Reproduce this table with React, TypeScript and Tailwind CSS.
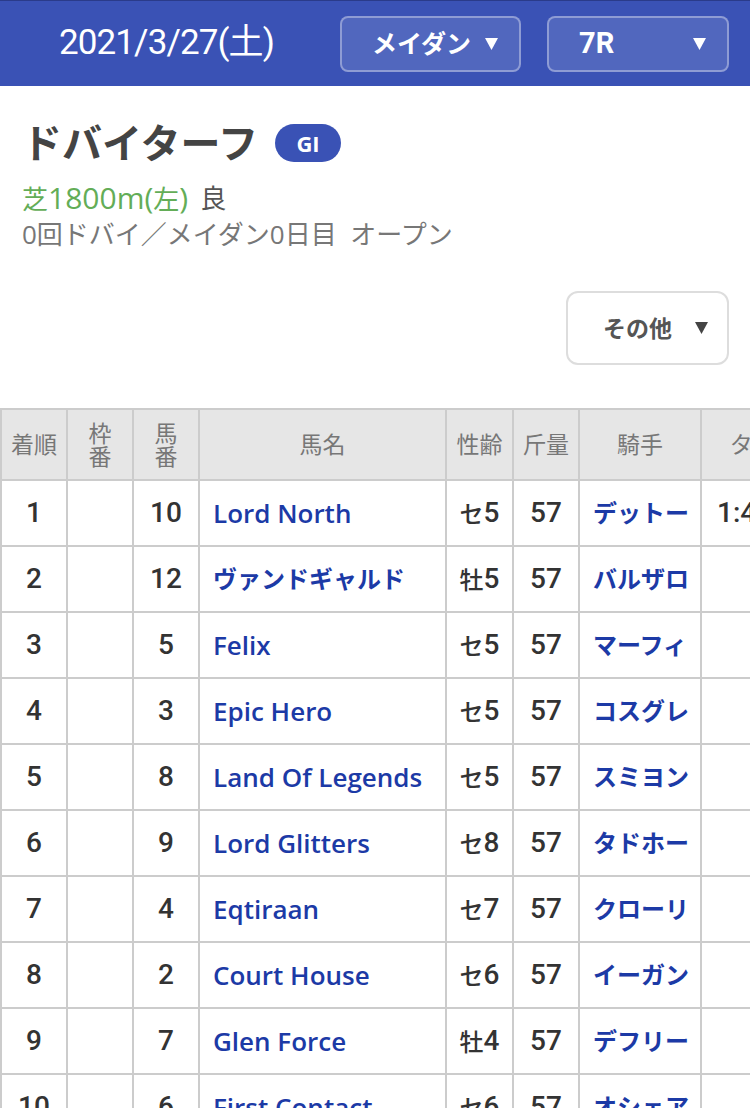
import React from "react";

type Row = {
  rank: number;
  waku: string;
  umaban: number;
  name: string;
  sex: string;
  age: number;
  weight: number;
  jockey: string;
  time: string;
};

const rows: Row[] = [
  { rank: 1, waku: "", umaban: 10, name: "Lord North", sex: "セ", age: 5, weight: 57, jockey: "デットー", time: "1:46.9" },
  { rank: 2, waku: "", umaban: 12, name: "ヴァンドギャルド", sex: "牡", age: 5, weight: 57, jockey: "バルザロ", time: "" },
  { rank: 3, waku: "", umaban: 5, name: "Felix", sex: "セ", age: 5, weight: 57, jockey: "マーフィ", time: "" },
  { rank: 4, waku: "", umaban: 3, name: "Epic Hero", sex: "セ", age: 5, weight: 57, jockey: "コスグレ", time: "" },
  { rank: 5, waku: "", umaban: 8, name: "Land Of Legends", sex: "セ", age: 5, weight: 57, jockey: "スミヨン", time: "" },
  { rank: 6, waku: "", umaban: 9, name: "Lord Glitters", sex: "セ", age: 8, weight: 57, jockey: "タドホー", time: "" },
  { rank: 7, waku: "", umaban: 4, name: "Eqtiraan", sex: "セ", age: 7, weight: 57, jockey: "クローリ", time: "" },
  { rank: 8, waku: "", umaban: 2, name: "Court House", sex: "セ", age: 6, weight: 57, jockey: "イーガン", time: "" },
  { rank: 9, waku: "", umaban: 7, name: "Glen Force", sex: "牡", age: 4, weight: 57, jockey: "デフリー", time: "" },
  { rank: 10, waku: "", umaban: 6, name: "First Contact", sex: "セ", age: 6, weight: 57, jockey: "オシェア", time: "" },
];

function Caret({ className }: { className?: string }) {
  return (
    <svg width="13" height="12" viewBox="0 0 13 12" className={className}>
      <polygon points="0,0 13,0 6.5,12" fill="currentColor" />
    </svg>
  );
}

function Select({ label, width, size }: { label: string; width: string; size: string }) {
  return (
    <div
      className={`${width} h-[56px] flex items-center justify-between pl-[30px] pr-[21px] rounded-[8px] border-2 border-white/35 bg-white/12 text-white`}
    >
      <span className={`${size} font-bold leading-none`}>{label}</span>
      <Caret />
    </div>
  );
}

const cell = "border-r-2 border-b-2 border-[#cccccc] flex items-center";
const num = "font-['Roboto','Noto_Sans_CJK_JP',sans-serif] text-[28px] font-medium text-[#333]";
const isLatin = (s: string) => /^[\x00-\x7F]+$/.test(s);

export default function App() {
  return (
    <div className="w-[750px] min-h-[1108px] bg-white overflow-hidden font-['Open_Sans','Noto_Sans_CJK_JP',sans-serif] text-[#333]">
      <header className="h-[86px] bg-[#3a52b5] border-t border-[#2a3b8a] flex items-center">
        <div className="w-[333px] text-center text-white text-[35px] font-['Roboto','Noto_Sans_CJK_JP',sans-serif] tracking-[-0.9px]">
          2021/3/27(土)
        </div>
        <div className="ml-[7px]">
          <Select label="メイダン" width="w-[181px]" size="text-[25px]" />
        </div>
        <div className="ml-[26px]">
          <Select label="7R" width="w-[182px]" size="text-[29px] font-['Roboto',sans-serif]" />
        </div>
      </header>

      <section className="pl-[22px] pt-[33px]">
        <div className="flex items-center h-[48px]">
          <h1 className="text-[40px] font-bold text-[#444] leading-none">ドバイターフ</h1>
          <span className="ml-[17px] w-[66px] h-[38px] rounded-full bg-[#3a52b5] text-white text-[22px] font-bold flex items-center justify-center">
            GI
          </span>
        </div>
        <div className="mt-[12px] h-[37px] flex items-center text-[26px] leading-none whitespace-nowrap">
          <span className="text-[#63ad57]">
            芝<span className="text-[30px]">1800m(</span>左<span className="text-[30px]">)</span>
          </span>
          <span className="ml-[12px] text-[#555]">良</span>
        </div>
        <div className="text-[26px] leading-[37px] text-[#777] whitespace-nowrap">0回ドバイ／メイダン0日目&nbsp; オープン</div>
      </section>

      <div className="flex justify-end pr-[21px] mt-[38px]">
        <div className="w-[163px] h-[74px] rounded-[12px] border-2 border-[#dddddd] flex items-center pl-[35px] text-[#555]">
          <span className="text-[23px] font-bold">その他</span>
          <Caret className="ml-[23px] text-[#444]" />
        </div>
      </div>

      <div className="mt-[43px] overflow-hidden">
        <div className="grid w-max grid-cols-[68px_66px_66px_247px_67px_66px_122px_126px_120px] border-t-2 border-[#cccccc]">
          {["着順", "枠\n番", "馬\n番", "馬名", "性齢", "斤量", "騎手", "タイム", "着差"].map((h, i) => (
            <div
              key={h}
              className={`${cell} ${i === 0 ? "border-l-2" : ""} justify-center h-[71px] bg-[#e6e6e6] text-[#777] text-[23px] leading-[23px] whitespace-pre-line text-center`}
            >
              {h}
            </div>
          ))}
          {rows.map((r) => (
            <React.Fragment key={r.rank}>
              <div className={`${cell} ${num} border-l-2 h-[66px] justify-center`}>{r.rank}</div>
              <div className={`${cell} h-[66px] justify-center`}>{r.waku}</div>
              <div className={`${cell} ${num} h-[66px] justify-center`}>{r.umaban}</div>
              <div
                className={`${cell} h-[66px] pl-[13px] ${isLatin(r.name) ? "text-[26px]" : "text-[24px]"} font-semibold text-[#1c3aa6] whitespace-nowrap`}
              >
                {r.name}
              </div>
              <div className={`${cell} ${num} h-[66px] justify-center`}>
                <span className="text-[24px] font-['Noto_Sans_CJK_JP',sans-serif]">{r.sex}</span>
                {r.age}
              </div>
              <div className={`${cell} ${num} h-[66px] justify-center`}>{r.weight}</div>
              <div className={`${cell} h-[66px] pl-[13px] text-[24px] font-semibold text-[#1c3aa6] whitespace-nowrap`}>
                {r.jockey}
              </div>
              <div className={`${cell} ${num} h-[66px] pl-[15px]`}>{r.time}</div>
              <div className={`${cell} h-[66px]`}></div>
            </React.Fragment>
          ))}
        </div>
      </div>
    </div>
  );
}
